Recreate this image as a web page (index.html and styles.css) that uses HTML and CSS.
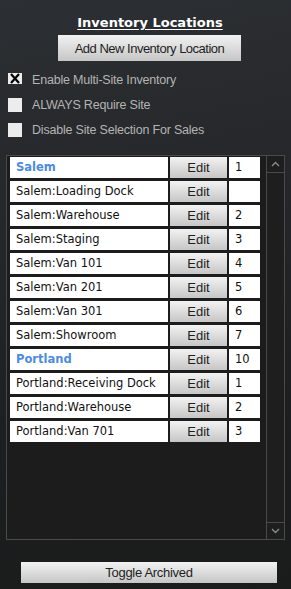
FILE: index.html
```html
<!DOCTYPE html>
<html lang="en">
<head>
    <meta charset="UTF-8">
    <meta name="viewport" content="width=device-width, initial-scale=1.0">
    <title>Inventory Locations</title>
    <link rel="stylesheet" href="styles.css">
</head>
<body>
    <div class="page">
        <h1 class="title">Inventory Locations</h1>
        <button class="btn add-btn">Add New Inventory Location</button>

        <div class="options">
            <label class="option"><span class="check checked"><svg width="14" height="11" viewBox="0 0 14 11"><path d="M3 1 L11 10 M11 1 L3 10" stroke="#000" stroke-width="2.2" fill="none"/></svg></span>Enable Multi-Site Inventory</label>
            <label class="option"><span class="check"></span>ALWAYS Require Site</label>
            <label class="option"><span class="check"></span>Disable Site Selection For Sales</label>
        </div>

        <div class="panel">
            <div class="list">
                <div class="row"><div class="name site">Salem</div><button class="btn edit">Edit</button><div class="num">1</div></div>
                <div class="row"><div class="name">Salem:Loading Dock</div><button class="btn edit">Edit</button><div class="num"></div></div>
                <div class="row"><div class="name">Salem:Warehouse</div><button class="btn edit">Edit</button><div class="num">2</div></div>
                <div class="row"><div class="name">Salem:Staging</div><button class="btn edit">Edit</button><div class="num">3</div></div>
                <div class="row"><div class="name">Salem:Van 101</div><button class="btn edit">Edit</button><div class="num">4</div></div>
                <div class="row"><div class="name">Salem:Van 201</div><button class="btn edit">Edit</button><div class="num">5</div></div>
                <div class="row"><div class="name">Salem:Van 301</div><button class="btn edit">Edit</button><div class="num">6</div></div>
                <div class="row"><div class="name">Salem:Showroom</div><button class="btn edit">Edit</button><div class="num">7</div></div>
                <div class="row"><div class="name site">Portland</div><button class="btn edit">Edit</button><div class="num">10</div></div>
                <div class="row"><div class="name">Portland:Receiving Dock</div><button class="btn edit">Edit</button><div class="num">1</div></div>
                <div class="row"><div class="name">Portland:Warehouse</div><button class="btn edit">Edit</button><div class="num">2</div></div>
                <div class="row"><div class="name">Portland:Van 701</div><button class="btn edit">Edit</button><div class="num">3</div></div>
            </div>
            <div class="scrollbar">
                <div class="arrow">
                    <svg width="9" height="6" viewBox="0 0 9 6"><path d="M1 5 L4.5 1.5 L8 5" fill="none" stroke="#8a8a8a" stroke-width="1.4"/></svg>
                </div>
                <div class="track"></div>
                <div class="arrow">
                    <svg width="9" height="6" viewBox="0 0 9 6"><path d="M1 1 L4.5 4.5 L8 1" fill="none" stroke="#8a8a8a" stroke-width="1.4"/></svg>
                </div>
            </div>
        </div>

        <button class="btn toggle-btn">Toggle Archived</button>
    </div>
</body>
</html>
```

FILE: styles.css
```css
html, body {
    margin: 0;
    padding: 0;
}
body {
    width: 291px;
    height: 589px;
    background: linear-gradient(170deg, #2c2f33 0%, #25272a 35%, #1d1e1f 70%, #1a1b1b 100%);
    font-family: 'Liberation Sans', Arial, sans-serif;
    color: #e0e0e0;
    overflow: hidden;
}
.page {
    padding-top: 15px;
}
.title {
    margin: 0;
    padding-left: 9px;
    font-family: 'DejaVu Sans', Verdana, sans-serif;
    font-size: 13px;
    line-height: 16px;
    font-weight: bold;
    color: #ffffff;
    text-align: center;
    text-decoration: underline;
    text-underline-offset: 2px;
}
.btn {
    font-family: 'Liberation Sans', Arial, sans-serif;
    color: #1e1e1e;
    background: linear-gradient(#f2f2f2, #c6c6c6);
    border: none;
    padding: 0;
    margin: 0;
}
.add-btn {
    display: block;
    width: 183px;
    height: 26px;
    margin: 4px 0 0 58px;
    font-size: 13px;
    letter-spacing: -0.5px;
}
.options {
    margin-top: 6px;
}
.option {
    display: flex;
    align-items: center;
    height: 25px;
    padding-left: 8px;
    font-size: 12.5px;
    letter-spacing: -0.2px;
    color: #b4b4b4;
}
.check {
    display: block;
    width: 14px;
    height: 14px;
    margin-right: 10px;
    background: #ececec;
}
.check svg {
    display: block;
}
.check.checked {
    height: 11px;
    margin-bottom: 2px;
}
.panel {
    display: flex;
    margin: 13px 0 0 6px;
    width: 277px;
    height: 383px;
    border: 1px solid #4a4a4a;
    background: #1c1c1c;
}
.list {
    flex: 1;
    padding: 1px 0 0 3px;
}
.row {
    display: flex;
    height: 21px;
    margin-bottom: 3px;
}
.name {
    width: 158px;
    background: #ffffff;
    color: #111111;
    font-family: 'DejaVu Sans', Verdana, sans-serif;
    font-size: 11.5px;
    line-height: 21px;
    padding-left: 6px;
    box-sizing: border-box;
    white-space: nowrap;
}
.name.site {
    color: #4b8be6;
    font-weight: bold;
}
.edit {
    width: 57px;
    height: 21px;
    margin-left: 2px;
    font-size: 13px;
}
.num {
    width: 31px;
    margin-left: 2px;
    background: #ffffff;
    color: #111111;
    font-family: 'DejaVu Sans', Verdana, sans-serif;
    font-size: 11.5px;
    line-height: 21px;
    padding-left: 6px;
    box-sizing: border-box;
}
.scrollbar {
    display: flex;
    flex-direction: column;
    width: 17px;
    border-left: 1px solid #4a4a4a;
    background: #1e1e1e;
}
.arrow {
    height: 16px;
    display: flex;
    align-items: center;
    justify-content: center;
}
.arrow:first-child {
    border-bottom: 1px solid #4a4a4a;
}
.arrow:last-child {
    border-top: 1px solid #4a4a4a;
}
.track {
    flex: 1;
}
.toggle-btn {
    display: block;
    width: 256px;
    height: 21px;
    margin: 22px 0 0 21px;
    font-size: 13px;
    letter-spacing: -0.3px;
}
```
